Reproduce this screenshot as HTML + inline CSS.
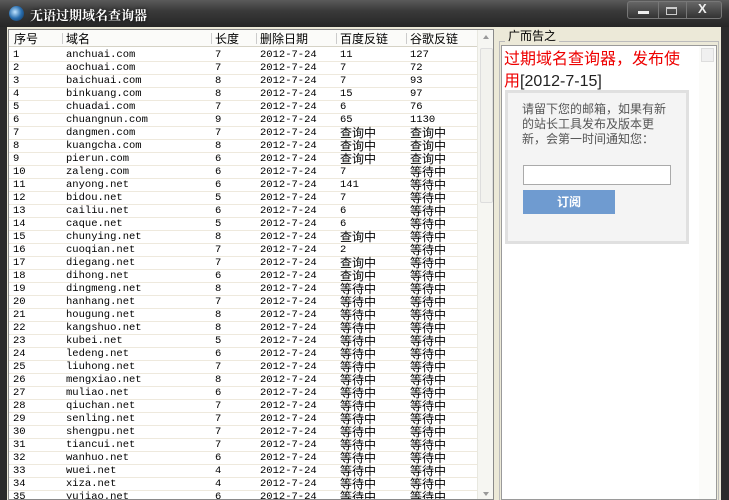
<!DOCTYPE html><html><head><meta charset="utf-8"><style>
*{margin:0;padding:0;box-sizing:border-box}
body{width:729px;height:500px;overflow:hidden;background:#2b2b2b;position:relative;font-family:"Liberation Sans","Noto Sans CJK SC",sans-serif}
#title{position:absolute;left:0;top:0;width:729px;height:27px;background:linear-gradient(#5a5a5a,#3a3a3a 40%,#262626);}
#title .t{position:absolute;left:30px;top:5px;color:#fff;font-size:13px;font-weight:bold;font-family:"Noto Serif CJK SC",serif;text-shadow:0 0 3px #000}
#logo{position:absolute;left:9px;top:6px;width:15px;height:15px;border-radius:50%;background:radial-gradient(circle at 40% 40%,#bfe4ff,#2a6fb0 50%,#0d2a4a)}
.btns{position:absolute;left:627px;top:1px;width:95px;height:18px;border:1px solid #777;border-radius:3px;background:linear-gradient(#666,#333)}
.btns div{position:absolute;top:0;height:16px;border-left:1px solid #777}
#client{position:absolute;left:7px;top:27px;width:714px;height:473px;background:#ece9d8}
#lv{position:absolute;left:8px;top:29px;width:486px;height:471px;background:#fff;border:1px solid #8a8a8a;overflow:hidden}
.hd{position:absolute;top:0;height:17px;width:486px;background:#fbfbf9;border-bottom:1px solid #d6d3c6;font-size:12px;font-family:"Noto Sans CJK SC",sans-serif;color:#000}
.hd span{position:absolute;top:0;line-height:17px}
.hd i{position:absolute;top:3px;width:1px;height:11px;background:#ccc}
.row{position:absolute;left:0;width:468px;height:13px;border-bottom:1px solid #eee9dd;font-size:11px;line-height:13px}
.row span{position:absolute;top:0;white-space:nowrap}
.m{font-family:"Liberation Mono",monospace;font-size:10.5px;color:#000}
.c{font-family:"Noto Sans CJK SC",sans-serif;font-size:12px;line-height:12px;top:0!important}
#sb{position:absolute;left:468px;top:0;width:17px;height:471px;background:#f6f6f2;border-left:1px solid #e8e8e0}
#thumb{position:absolute;left:2px;top:18px;width:13px;height:155px;border:1px solid #ddd;background:#f2f2ee;border-radius:2px}
#grp{position:absolute;left:499px;top:41px;width:220px;height:459px;border:1px solid #bbb;border-bottom:none}
#gl{position:absolute;left:505px;top:29px;background:#ece9d8;font-size:12px;padding:0 3px;font-family:"Noto Sans CJK SC",sans-serif;line-height:14px}
#web{position:absolute;left:501px;top:45px;width:216px;height:455px;background:#fff;border:1px solid #9a9a9a}
#wsb{position:absolute;right:0;top:0;width:17px;height:453px;background:#fbfbf9}
#ad{position:absolute;left:2px;top:0px;color:#e00;font-size:16px;line-height:22px;font-family:"Noto Sans CJK SC",sans-serif}
#ad b{font-weight:normal;color:#222;font-family:"Liberation Sans",sans-serif}
#box{position:absolute;left:3px;top:44px;width:184px;height:154px;background:#f4f4f4;border:3px solid #e0e0e0}
#box p{position:absolute;left:14px;top:8px;width:148px;font-size:12px;line-height:15px;color:#555;font-family:"Noto Sans CJK SC",sans-serif}
#inp{position:absolute;left:15px;top:72px;width:148px;height:20px;background:#fff;border:1px solid #aaa}
#sub{position:absolute;left:15px;top:97px;width:92px;height:24px;background:#6f9bd0;color:#fff;font-weight:bold;font-size:12px;text-align:center;line-height:24px;font-family:"Noto Sans CJK SC",sans-serif}
</style></head><body>
<div id="title"><div id="logo"></div><div class="t">无语过期域名查询器</div>
<div class="btns"><div style="left:30px"></div><div style="left:58px"></div>
<span style="position:absolute;left:10px;top:9px;width:11px;height:3px;background:#eee"></span>
<span style="position:absolute;left:38px;top:5px;width:11px;height:8px;border:1px solid #ccc;border-top-width:2px"></span>
<span style="position:absolute;left:70px;top:-1px;color:#eee;font-weight:bold;font-size:13px">X</span></div></div>
<div id="client"></div>
<div id="lv">
<div class="hd"><span style="left:5px">序号</span><i style="left:53px"></i><span style="left:57px">域名</span><i style="left:202px"></i><span style="left:206px">长度</span><i style="left:247px"></i><span style="left:251px">删除日期</span><i style="left:327px"></i><span style="left:331px">百度反链</span><i style="left:397px"></i><span style="left:401px">谷歌反链</span></div>
<div id="rows"></div>
<div id="sb"><div style="position:absolute;left:5px;top:5px;border:3px solid transparent;border-bottom:4px solid #999;border-top:0"></div><div id="thumb"></div><div style="position:absolute;left:5px;top:462px;border:3px solid transparent;border-top:4px solid #999;border-bottom:0"></div></div>
</div>
<div id="grp"></div><div id="gl">广而告之</div>
<div id="web"><div id="wsb"><div style="position:absolute;left:2px;top:2px;width:13px;height:14px;border:1px solid #ddd;background:#f0f0f0"></div></div>
<div id="ad">过期域名查询器，发布使<br>用<b>[2012-7-15]</b></div>
<div id="box"><p>请留下您的邮箱，如果有新的站长工具发布及版本更新，会第一时间通知您：</p><div id="inp"></div><div id="sub">订阅</div></div></div>
<script>
var d=[["anchuai.com",7,"11","127"],["aochuai.com",7,"7","72"],["baichuai.com",8,"7","93"],["binkuang.com",8,"15","97"],["chuadai.com",7,"6","76"],["chuangnun.com",9,"65","1130"],["dangmen.com",7,"查询中","查询中"],["kuangcha.com",8,"查询中","查询中"],["pierun.com",6,"查询中","查询中"],["zaleng.com",6,"7","等待中"],["anyong.net",6,"141","等待中"],["bidou.net",5,"7","等待中"],["cailiu.net",6,"6","等待中"],["caque.net",5,"6","等待中"],["chunying.net",8,"查询中","等待中"],["cuoqian.net",7,"2","等待中"],["diegang.net",7,"查询中","等待中"],["dihong.net",6,"查询中","等待中"],["dingmeng.net",8,"等待中","等待中"],["hanhang.net",7,"等待中","等待中"],["hougung.net",8,"等待中","等待中"],["kangshuo.net",8,"等待中","等待中"],["kubei.net",5,"等待中","等待中"],["ledeng.net",6,"等待中","等待中"],["liuhong.net",7,"等待中","等待中"],["mengxiao.net",8,"等待中","等待中"],["muliao.net",6,"等待中","等待中"],["qiuchan.net",7,"等待中","等待中"],["senling.net",7,"等待中","等待中"],["shengpu.net",7,"等待中","等待中"],["tiancui.net",7,"等待中","等待中"],["wanhuo.net",6,"等待中","等待中"],["wuei.net",4,"等待中","等待中"],["xiza.net",4,"等待中","等待中"],["yujiao.net",6,"等待中","等待中"]];
var h="";function f(v){return /^[0-9]+$/.test(v)?'class="m"':'class="c"'}
d.forEach(function(r,i){h+='<div class="row" style="top:'+(19+i*13)+'px"><span class="m" style="left:4px">'+(i+1)+'</span><span class="m" style="left:57px">'+r[0]+'</span><span class="m" style="left:206px">'+r[1]+'</span><span class="m" style="left:251px">2012-7-24</span><span '+f(r[2])+' style="left:331px">'+r[2]+'</span><span '+f(r[3])+' style="left:401px">'+r[3]+'</span></div>'});
document.getElementById("rows").innerHTML=h;
</script>
</body></html>
